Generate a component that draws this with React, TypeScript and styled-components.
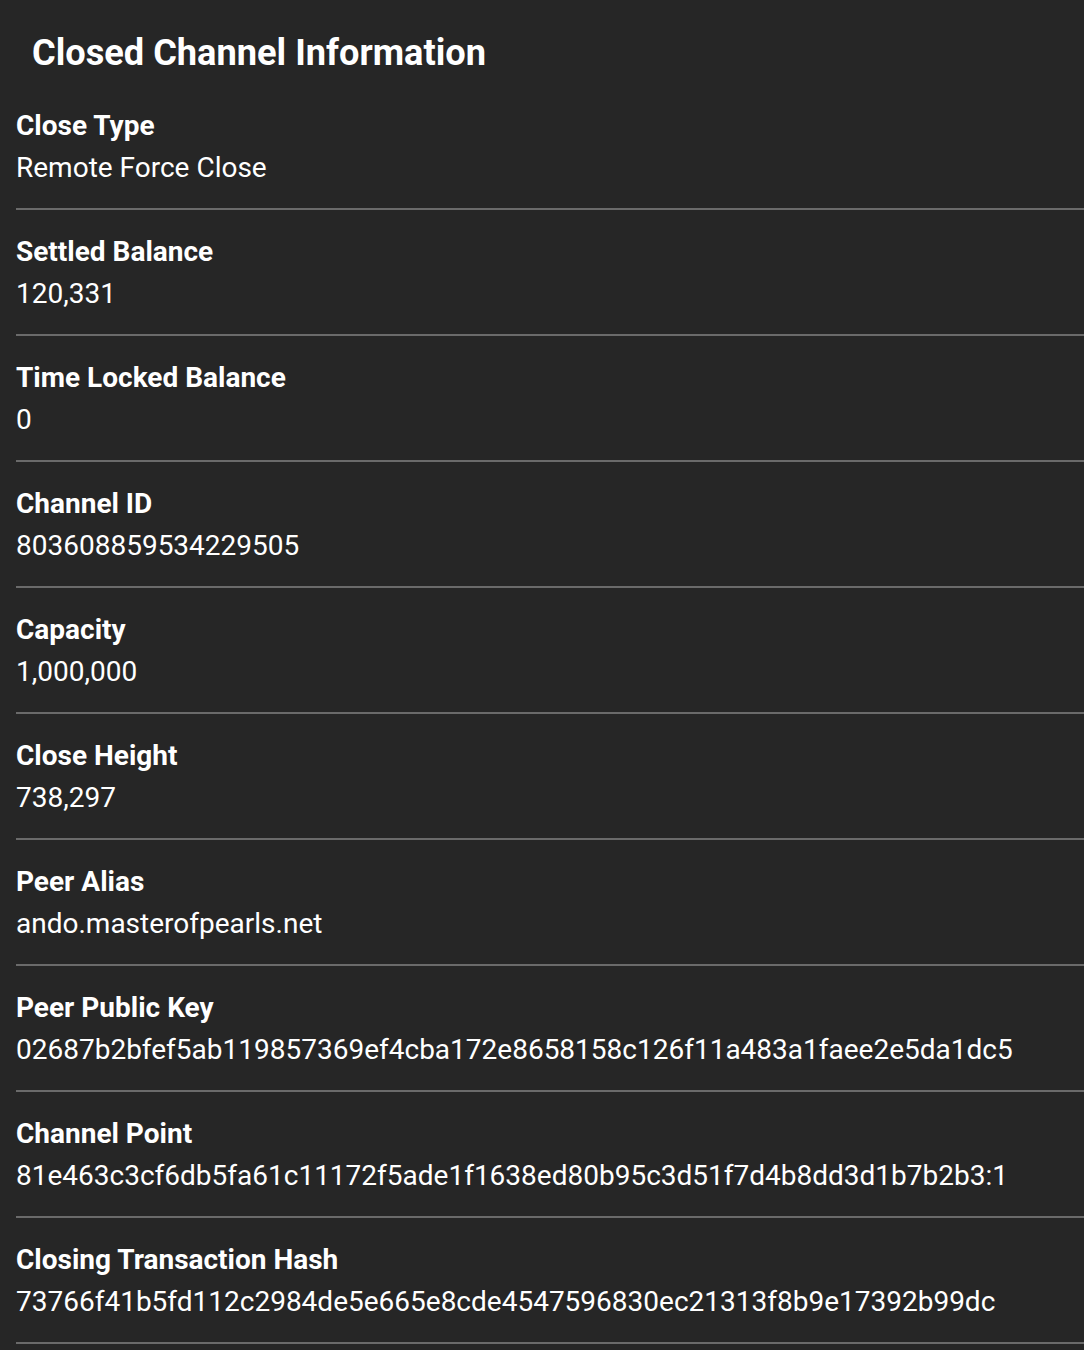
import React from 'react';
import styled, { createGlobalStyle } from 'styled-components';

interface IField {
    label: string;
    value: string;
}

const GlobalStyle = createGlobalStyle`
    html, body {
        margin: 0;
        padding: 0;
        background-color: #262626;
    }
    body {
        font-family: Roboto, "Noto Sans", "Liberation Sans", sans-serif;
        color: #ffffff;
        -webkit-font-smoothing: antialiased;
    }
`;

const Container = styled.div`
    display: flex;
    flex-direction: column;
    width: 1084px;
    min-height: 1350px;
    background-color: #262626;
`;

const Title = styled.h1`
    margin: 0;
    padding: 30px 32px 8px 32px;
    font-size: 36.2px;
    line-height: 46px;
    font-weight: 700;
    color: #ffffff;
`;

const List = styled.div`
    display: flex;
    flex-direction: column;
    padding-left: 16px;
`;

const Row = styled.div`
    display: flex;
    flex-direction: column;
    padding: 21px 0px 19px 0px;
    border-bottom: 2px solid #6a6a6a;
`;

const Label = styled.span`
    font-size: 28px;
    line-height: 42px;
    font-weight: 700;
`;

const Value = styled.span`
    font-size: 28px;
    line-height: 42px;
    font-weight: 400;
    white-space: nowrap;
`;

const fields: IField[] = [
    { label: 'Close Type', value: 'Remote Force Close' },
    { label: 'Settled Balance', value: '120,331' },
    { label: 'Time Locked Balance', value: '0' },
    { label: 'Channel ID', value: '803608859534229505' },
    { label: 'Capacity', value: '1,000,000' },
    { label: 'Close Height', value: '738,297' },
    { label: 'Peer Alias', value: 'ando.masterofpearls.net' },
    {
        label: 'Peer Public Key',
        value: '02687b2bfef5ab119857369ef4cba172e8658158c126f11a483a1faee2e5da1dc5',
    },
    {
        label: 'Channel Point',
        value: '81e463c3cf6db5fa61c11172f5ade1f1638ed80b95c3d51f7d4b8dd3d1b7b2b3:1',
    },
    {
        label: 'Closing Transaction Hash',
        value: '73766f41b5fd112c2984de5e665e8cde4547596830ec21313f8b9e17392b99dc',
    },
];

const App: React.FC = () => {
    return (
        <>
            <GlobalStyle />
            <Container>
                <Title>Closed Channel Information</Title>
                <List>
                    {fields.map((field) => (
                        <Row key={field.label}>
                            <Label>{field.label}</Label>
                            <Value>{field.value}</Value>
                        </Row>
                    ))}
                </List>
            </Container>
        </>
    );
};

export default App;
